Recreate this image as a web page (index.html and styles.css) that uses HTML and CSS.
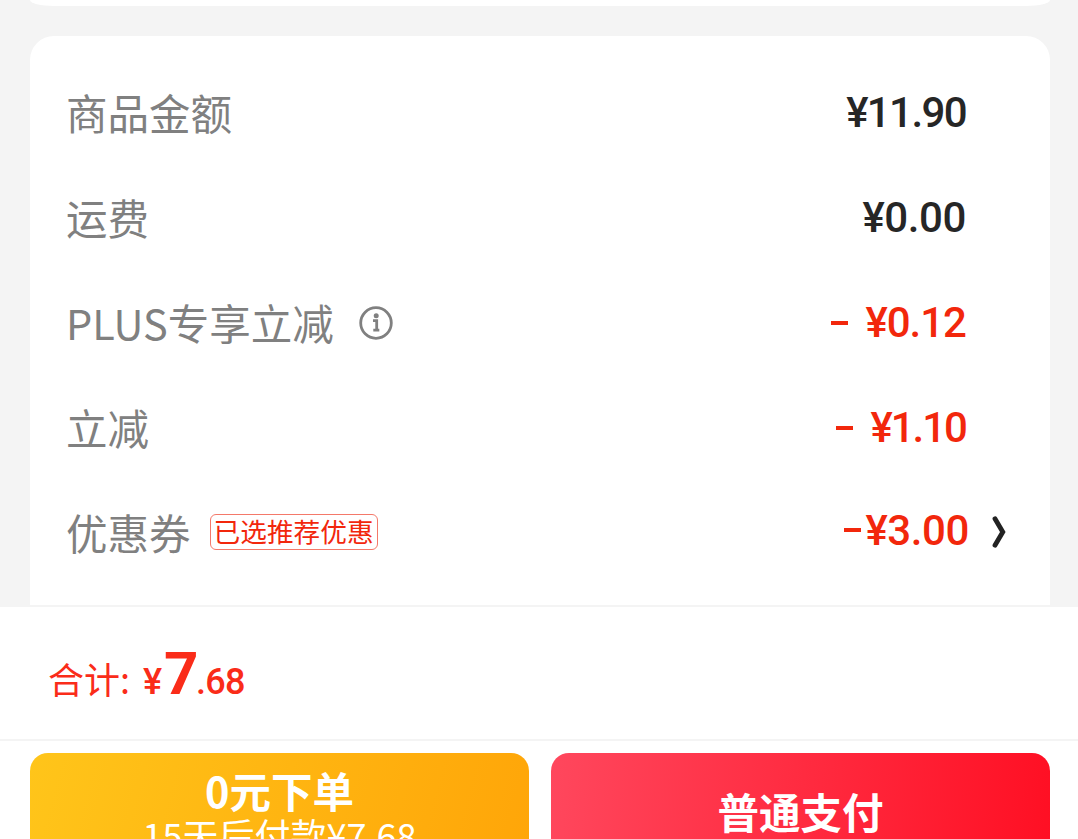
FILE: index.html
```
<!DOCTYPE html>
<html lang="zh-CN">
<head>
  <meta charset="UTF-8">
  <meta name="viewport" content="width=device-width, initial-scale=1.0">
  <title>确认订单</title>
  <link rel="stylesheet" href="styles.css">
</head>
<body>
  <main class="content">
    <div class="card card-prev"></div>
    <div class="card">
      <div class="row">
        <span class="label">商品金额</span>
        <span class="price price-goods">¥11.90</span>
      </div>
      <div class="row">
        <span class="label">运费</span>
        <span class="price price-freight">¥0.00</span>
      </div>
      <div class="row">
        <span class="label">PLUS专享立减</span>
        <svg class="info" viewBox="0 0 34 34">
          <circle cx="17" cy="17" r="15.3" fill="none" stroke="#808080" stroke-width="2.8"/>
          <circle cx="17.2" cy="9.7" r="2.5" fill="#808080"/>
          <path d="M14 14.7h3.7v9M14.3 24.2h6" fill="none" stroke="#808080" stroke-width="2.8"/>
        </svg>
        <span class="price red price-plus"><span class="minus"></span>¥0.12</span>
      </div>
      <div class="row">
        <span class="label">立减</span>
        <span class="price red price-cut"><span class="minus"></span>¥1.10</span>
      </div>
      <div class="row row-coupon">
        <span class="label">优惠券</span>
        <span class="tag">已选推荐优惠</span>
        <span class="price red"><span class="minus"></span>¥3.00</span>
        <svg class="arrow" viewBox="0 0 14 32">
          <path d="M3 2.8 10.8 16 3 29.2" fill="none" stroke="#222" stroke-width="4.8" stroke-linecap="round"/>
        </svg>
      </div>
    </div>
  </main>

  <div class="total">
    <span class="total-label">合计:</span>
    <span class="total-yen">¥</span>
    <span class="total-int">7</span>
    <span class="total-dec">.68</span>
  </div>

  <div class="actions">
    <button class="button button-later">
      <strong>0元下单</strong>
      <span>15天后付款¥7.68</span>
    </button>
    <button class="button button-pay"><strong>普通支付</strong></button>
  </div>
</body>
</html>
```
FILE: styles.css
```
* {
  box-sizing: border-box;
}
body {
  margin: 0;
  height: 839px;
  overflow: hidden;
  display: flex;
  flex-direction: column;
  background-color: #fff;
  font-family: "Noto Sans CJK SC", sans-serif;
}

/* 金额明细 */
.content {
  height: 605px;
  flex: none;
  overflow: hidden;
  padding: 0 28px 0 30px;
  background-color: #f4f4f4;
}
.card {
  height: 600px;
  padding: 26px 37px 0 36px;
  background-color: #fff;
  border-radius: 24px;
}
.card-prev {
  height: 6px;
  margin-bottom: 30px;
  padding: 0;
  border-radius: 0 0 24px 24px / 0 0 6px 6px;
}
.row {
  display: flex;
  align-items: center;
  height: 105px;
  padding-right: 47px;
}
.label {
  margin-top: -5px;
  font-size: 41.5px;
  line-height: 60px;
  color: #808080;
}
.info {
  width: 34px;
  height: 34px;
  margin: -4px 0 0 25px;
}
.price {
  display: flex;
  align-items: center;
  margin: -3px 0 0 auto;
  font-family: Roboto, sans-serif;
  font-size: 42px;
  font-weight: 500;
  line-height: 60px;
  letter-spacing: -1px;
  color: #262626;
}
.price-goods {
  letter-spacing: -1.6px;
}
.price-freight {
  letter-spacing: -0.4px;
}
.price-cut {
  letter-spacing: -2px;
}
.red {
  color: #f2270c;
}
.minus {
  width: 17px;
  height: 4px;
  margin: -1px 17px 0 0;
  background-color: #f2270c;
}
.tag {
  height: 36px;
  margin: -5px 0 0 19px;
  padding: 0 3px;
  border: 1px solid #f4796a;
  border-radius: 6px;
  font-size: 26.7px;
  line-height: 31px;
  color: #f2270c;
}
.row-coupon {
  padding-right: 7px;
}
.row-coupon .price {
  margin-top: -8px;
  letter-spacing: -0.4px;
}
.row-coupon .minus {
  margin-right: 4px;
}
.arrow {
  width: 14px;
  height: 32px;
  margin: -5px 0 0 23px;
}

/* 合计 */
.total {
  display: flex;
  align-items: baseline;
  flex: none;
  height: 136px;
  padding: 29px 0 0 48px;
  border-top: 2px solid #f4f4f4;
  border-bottom: 2px solid #f4f4f4;
  font-family: Roboto, sans-serif;
  line-height: 76px;
  color: #fa2c19;
}
.total-label {
  width: 95px;
  font-family: "Noto Sans CJK SC", sans-serif;
  font-size: 36px;
}
.total-yen,
.total-dec {
  font-size: 36px;
  font-weight: 500;
}
.total-yen {
  width: 21px;
}
.total-int {
  width: 32px;
  font-size: 60px;
  font-weight: 700;
}
.total-dec {
  letter-spacing: -0.7px;
}

/* 底部按钮 */
.actions {
  display: flex;
  flex: none;
  gap: 22px;
  padding: 12px 28px 0 30px;
}
.button {
  flex: 1;
  display: flex;
  flex-direction: column;
  align-items: center;
  justify-content: center;
  height: 120px;
  padding: 0 0 4px;
  border: none;
  border-radius: 18px;
  color: #fff;
  font-family: "Noto Sans CJK SC", sans-serif;
  font-size: 41.5px;
  line-height: 46px;
}
.button span {
  font-size: 36px;
  line-height: 42px;
}
.button-later {
  justify-content: flex-start;
  padding-top: 14px;
  background: linear-gradient(105deg, #ffc51a, #ffa508);
}
.button-pay {
  background: linear-gradient(95deg, #ff475d, #ff0f23);
}
```
